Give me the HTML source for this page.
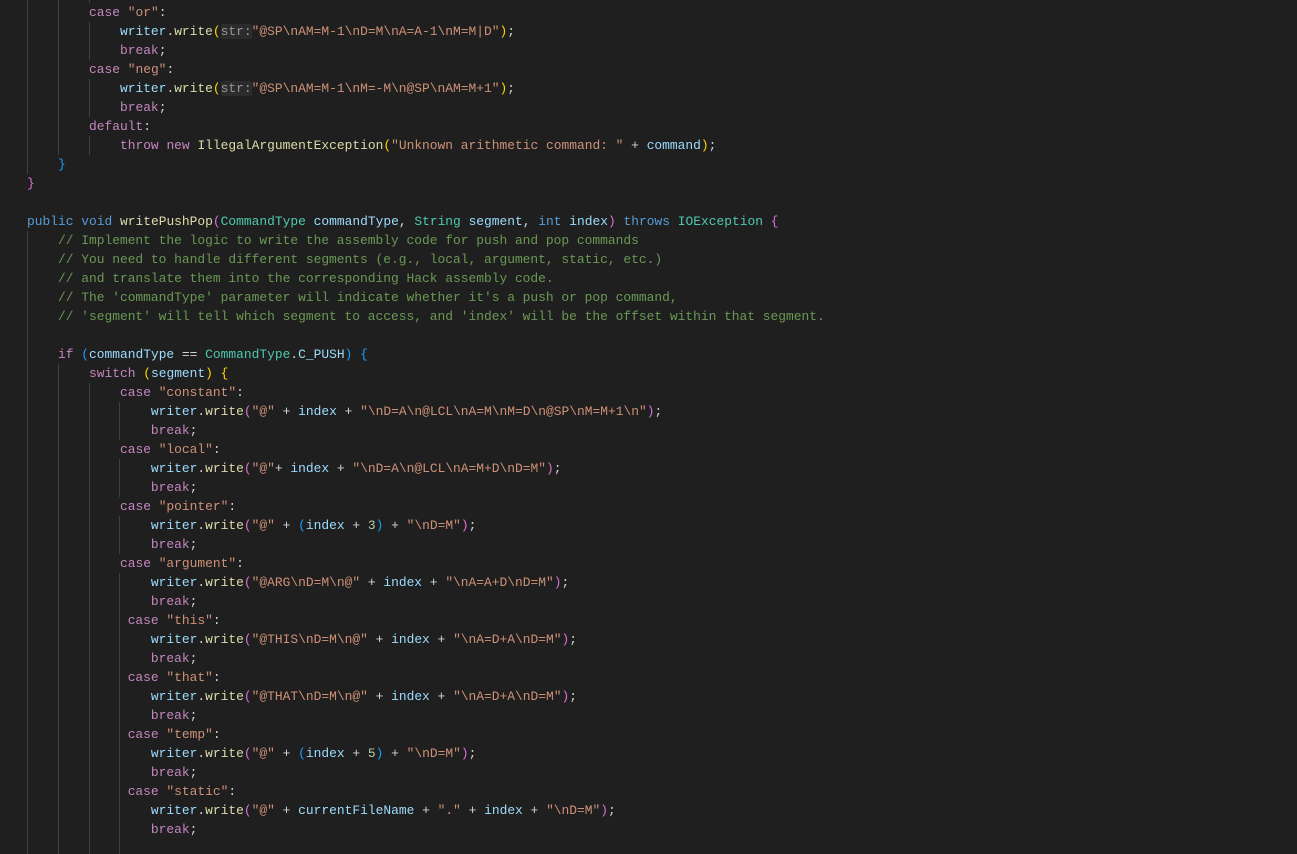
<!DOCTYPE html>
<html><head><meta charset="utf-8">
<style>
html,body{margin:0;padding:0;background:#1f1f1f;width:1297px;height:854px;overflow:hidden;}
pre{position:absolute;left:27px;top:-16px;margin:0;font-family:"Liberation Mono",monospace;font-size:12.92px;line-height:19px;color:#d4d4d4;white-space:pre;}
.g{position:absolute;width:1px;background:#404040;}
.k{color:#c586c0}.b{color:#569cd6}.s{color:#ce9178}.v{color:#9cdcfe}.f{color:#dcdcaa}.t{color:#4ec9b0}.c{color:#6a9955}.n{color:#b5cea8}
.y{color:#ffd700}.p{color:#da70d6}.u{color:#179fff}
.h{color:#969696;background:#2c2c2c;border-radius:2px}
</style></head><body>
<div class="g" style="left:27px;top:0;height:174px"></div>
<div class="g" style="left:27px;top:231px;height:623px"></div>
<div class="g" style="left:58px;top:0;height:155px"></div>
<div class="g" style="left:58px;top:364px;height:490px"></div>
<div class="g" style="left:89px;top:0;height:3px"></div>
<div class="g" style="left:89px;top:22px;height:38px"></div>
<div class="g" style="left:89px;top:79px;height:38px"></div>
<div class="g" style="left:89px;top:136px;height:19px"></div>
<div class="g" style="left:89px;top:383px;height:471px"></div>
<div class="g" style="left:119px;top:402px;height:38px"></div>
<div class="g" style="left:119px;top:459px;height:38px"></div>
<div class="g" style="left:119px;top:516px;height:38px"></div>
<div class="g" style="left:119px;top:573px;height:281px"></div>
<pre>            <span class="k">break</span>;
        <span class="k">case</span> <span class="s">"or"</span>:
            <span class="v">writer</span>.<span class="f">write</span><span class="y">(</span><span class="h">str:</span><span class="s">"@SP\nAM=M-1\nD=M\nA=A-1\nM=M|D"</span><span class="y">)</span>;
            <span class="k">break</span>;
        <span class="k">case</span> <span class="s">"neg"</span>:
            <span class="v">writer</span>.<span class="f">write</span><span class="y">(</span><span class="h">str:</span><span class="s">"@SP\nAM=M-1\nM=-M\n@SP\nAM=M+1"</span><span class="y">)</span>;
            <span class="k">break</span>;
        <span class="k">default</span>:
            <span class="k">throw</span> <span class="k">new</span> <span class="f">IllegalArgumentException</span><span class="y">(</span><span class="s">"Unknown arithmetic command: "</span> + <span class="v">command</span><span class="y">)</span>;
    <span class="u">}</span>
<span class="p">}</span>

<span class="b">public</span> <span class="b">void</span> <span class="f">writePushPop</span><span class="p">(</span><span class="t">CommandType</span> <span class="v">commandType</span>, <span class="t">String</span> <span class="v">segment</span>, <span class="b">int</span> <span class="v">index</span><span class="p">)</span> <span class="b">throws</span> <span class="t">IOException</span> <span class="p">{</span>
    <span class="c">// Implement the logic to write the assembly code for push and pop commands</span>
    <span class="c">// You need to handle different segments (e.g., local, argument, static, etc.)</span>
    <span class="c">// and translate them into the corresponding Hack assembly code.</span>
    <span class="c">// The 'commandType' parameter will indicate whether it's a push or pop command,</span>
    <span class="c">// 'segment' will tell which segment to access, and 'index' will be the offset within that segment.</span>

    <span class="k">if</span> <span class="u">(</span><span class="v">commandType</span> == <span class="t">CommandType</span>.<span class="v">C_PUSH</span><span class="u">)</span> <span class="u">{</span>
        <span class="k">switch</span> <span class="y">(</span><span class="v">segment</span><span class="y">)</span> <span class="y">{</span>
            <span class="k">case</span> <span class="s">"constant"</span>:
                <span class="v">writer</span>.<span class="f">write</span><span class="p">(</span><span class="s">"@"</span> + <span class="v">index</span> + <span class="s">"\nD=A\n@LCL\nA=M\nM=D\n@SP\nM=M+1\n"</span><span class="p">)</span>;
                <span class="k">break</span>;
            <span class="k">case</span> <span class="s">"local"</span>:
                <span class="v">writer</span>.<span class="f">write</span><span class="p">(</span><span class="s">"@"</span>+ <span class="v">index</span> + <span class="s">"\nD=A\n@LCL\nA=M+D\nD=M"</span><span class="p">)</span>;
                <span class="k">break</span>;
            <span class="k">case</span> <span class="s">"pointer"</span>:
                <span class="v">writer</span>.<span class="f">write</span><span class="p">(</span><span class="s">"@"</span> + <span class="u">(</span><span class="v">index</span> + <span class="n">3</span><span class="u">)</span> + <span class="s">"\nD=M"</span><span class="p">)</span>;
                <span class="k">break</span>;
            <span class="k">case</span> <span class="s">"argument"</span>:
                <span class="v">writer</span>.<span class="f">write</span><span class="p">(</span><span class="s">"@ARG\nD=M\n@"</span> + <span class="v">index</span> + <span class="s">"\nA=A+D\nD=M"</span><span class="p">)</span>;
                <span class="k">break</span>;
             <span class="k">case</span> <span class="s">"this"</span>:
                <span class="v">writer</span>.<span class="f">write</span><span class="p">(</span><span class="s">"@THIS\nD=M\n@"</span> + <span class="v">index</span> + <span class="s">"\nA=D+A\nD=M"</span><span class="p">)</span>;
                <span class="k">break</span>;
             <span class="k">case</span> <span class="s">"that"</span>:
                <span class="v">writer</span>.<span class="f">write</span><span class="p">(</span><span class="s">"@THAT\nD=M\n@"</span> + <span class="v">index</span> + <span class="s">"\nA=D+A\nD=M"</span><span class="p">)</span>;
                <span class="k">break</span>;
             <span class="k">case</span> <span class="s">"temp"</span>:
                <span class="v">writer</span>.<span class="f">write</span><span class="p">(</span><span class="s">"@"</span> + <span class="u">(</span><span class="v">index</span> + <span class="n">5</span><span class="u">)</span> + <span class="s">"\nD=M"</span><span class="p">)</span>;
                <span class="k">break</span>;
             <span class="k">case</span> <span class="s">"static"</span>:
                <span class="v">writer</span>.<span class="f">write</span><span class="p">(</span><span class="s">"@"</span> + <span class="v">currentFileName</span> + <span class="s">"."</span> + <span class="v">index</span> + <span class="s">"\nD=M"</span><span class="p">)</span>;
                <span class="k">break</span>;
</pre>
</body></html>
